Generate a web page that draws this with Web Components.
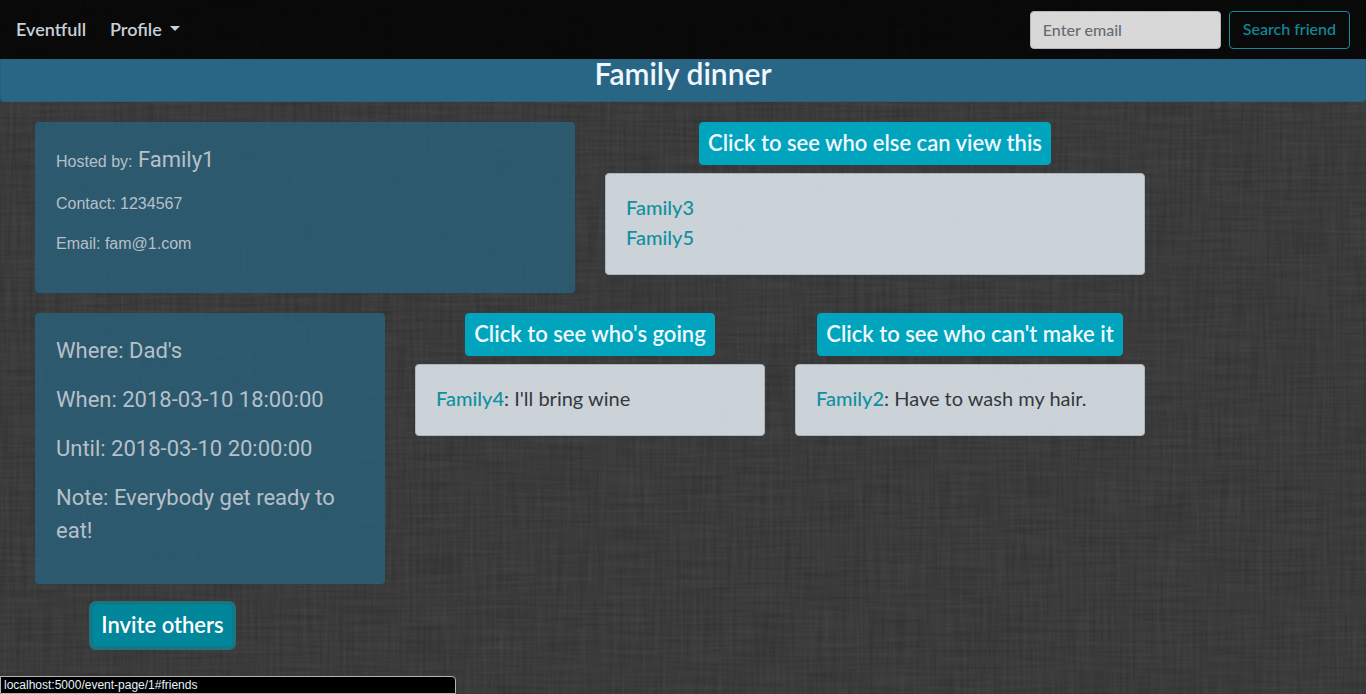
<!DOCTYPE html>
<html lang="en">
<head>
<meta charset="utf-8">
<meta name="viewport" content="width=device-width, initial-scale=1">
<title>Eventfull</title>
<style>
  body { margin: 0; background: #383838; font-family: Lato, "Liberation Sans", sans-serif; }
</style>
</head>
<body>
<event-page></event-page>

<script>
function define(name, html) {
  const template = document.createElement('template');
  template.innerHTML = html;
  customElements.define(name, class extends HTMLElement {
    connectedCallback() {
      if (this.shadowRoot) return;
      this.attachShadow({ mode: 'open' }).append(template.content.cloneNode(true));
    }
  });
}

define('linen-backdrop', `
  <style>
    :host { display: block; position: absolute; inset: 0; z-index: -1; overflow: hidden; }
    svg { display: block; width: 100%; height: 100%; }
  </style>
  <svg aria-hidden="true">
    <filter id="linen" x="0" y="0" width="100%" height="100%" color-interpolation-filters="sRGB">
      <feTurbulence type="fractalNoise" baseFrequency="0.3 0.015" numOctaves="2" seed="4" result="warp"/>
      <feTurbulence type="fractalNoise" baseFrequency="0.015 0.3" numOctaves="2" seed="9" result="weft"/>
      <feComposite in="warp" in2="weft" operator="arithmetic" k2="0.5" k3="0.5"/>
      <feColorMatrix values="0.11 0 0 0 0.175  0.11 0 0 0 0.175  0.11 0 0 0 0.175  0 0 0 0 1"/>
    </filter>
    <rect width="100%" height="100%" filter="url(#linen)"/>
  </svg>`);

define('nav-bar', `
  <style>
    :host { display: block; background: rgba(0,0,0,.84); color: #c8d0d8; }
    nav { display: flex; align-items: center; gap: 24px; padding: 11px 16px 10px; }
    a, .menu { color: inherit; font: 600 18px/28px Lato, sans-serif; text-decoration: none; background: none; border: 0; padding: 0 0 2px; }
    .menu { display: flex; align-items: center; gap: 8px; }
    .menu::after { content: ""; border: 5px solid transparent; border-top-color: currentColor; border-bottom: 0; margin-bottom: 2px; }
    form { display: flex; gap: 8px; margin-left: auto; }
    input, .search { box-sizing: border-box; height: 38px; border-radius: 4px; font: 500 16px/24px Lato, sans-serif; }
    input { width: 191px; padding: 0 12px 2px; border: 1px solid #b1b7bd; background: #d8d8d8; color: #495057; }
    input::placeholder { color: #646c74; opacity: 1; }
    .search { padding: 0 13px 2px; border: 1px solid #118b9c; background: none; color: #118b9c; }
  </style>
  <nav>
    <a href="#home">Eventfull</a>
    <button class="menu" type="button" aria-haspopup="true">Profile</button>
    <form>
      <input type="email" placeholder="Enter email" aria-label="Enter email">
      <button class="search" type="button">Search friend</button>
    </form>
  </nav>`);

define('event-banner', `
  <style>
    :host { display: block; background: #296685; border: 1px solid #295d78; border-top: 0; border-radius: 0 0 4px 4px; }
    h1 { margin: 0; padding-bottom: 14px; font: 600 30px/28px Lato, sans-serif; color: #f0f8ff; text-align: center; }
  </style>
  <h1><slot></slot></h1>`);

define('info-card', `
  <style>
    :host { display: block; box-sizing: border-box; padding: 20px; border: 1px solid rgba(36,93,121,.8); border-radius: 4px;
      background: rgba(43,96,123,.82); color: #b7c0c8; font-family: Roboto, sans-serif; font-size: 22px; line-height: 33px; }
    ::slotted(p) { margin: 0 0 16px; }
  </style>
  <slot></slot>`);

define('reply-card', `
  <style>
    :host { display: block; padding: 18px 20px 22px; border: 1px solid #adb4bb; border-radius: 4px;
      background: rgba(224,232,238,.88); color: #34393d; font-size: 20px; font-weight: 400; line-height: 30px; }
    ::slotted(p) { margin: 0; }
  </style>
  <slot></slot>`);

define('action-button', `
  <style>
    :host { display: flex; justify-content: center; }
    button { padding: 3px 8px 5px; border: 1px solid #00a4bd; border-radius: 4px; background: #00a4bd; color: #f0f8ff;
      font: 600 22px/33px Lato, sans-serif; }
    :host([active]) button { background: #01869b; border-color: #017f93; color: #fff; box-shadow: 0 0 0 3px #1d747f; }
  </style>
  <button type="button"><slot></slot></button>`);

define('user-link', `
  <style>
    :host { display: inline; }
    a { color: #118fa0; font-weight: 500; text-decoration: none; }
  </style>
  <a href="#profile"><slot></slot></a>`);

define('field-label', `
  <style>
    :host { display: inline; font: 16px "Liberation Sans", sans-serif; }
  </style>
  <slot></slot>`);

define('link-status', `
  <style>
    :host { display: block; position: fixed; left: 0; bottom: 0; box-sizing: border-box; width: 456px; max-width: 100%;
      padding: 0 3px; border: 1px solid #b4b4b4; border-radius: 0 4px 0 0; background: #000; color: #e6f3fb;
      font: 12px/16px "Liberation Sans", sans-serif; }
  </style>
  <slot></slot>`);

define('event-page', `
  <style>
    :host { display: block; position: relative; z-index: 0; box-sizing: border-box; min-height: 100vh; overflow: hidden; }
    main { display: grid; grid-template-columns: repeat(12, minmax(0, 1fr)); gap: 20px 30px; align-items: start;
      max-width: 1110px; margin: 20px 35px 44px; }
    section { display: grid; gap: 8px; }
    .half { grid-column: span 6; }
    .third { grid-column: span 4; }
    .quarter { grid-column: span 3; }
    .small { font: 16px/24px "Liberation Sans", sans-serif; }
    @media (max-width: 800px) { .half, .third, .quarter { grid-column: 1 / -1; } }
  </style>
  <linen-backdrop></linen-backdrop>
  <nav-bar></nav-bar>
  <event-banner>Family dinner</event-banner>
  <main>
    <info-card class="half">
      <p><field-label>Hosted by:</field-label> Family1</p>
      <p class="small">Contact: 1234567</p>
      <p class="small">Email: fam@1.com</p>
    </info-card>
    <section class="half">
      <action-button>Click to see who else can view this</action-button>
      <reply-card>
        <p><user-link>Family3</user-link></p>
        <p><user-link>Family5</user-link></p>
      </reply-card>
    </section>
    <info-card class="third">
      <p>Where: Dad's</p>
      <p>When: 2018-03-10 18:00:00</p>
      <p>Until: 2018-03-10 20:00:00</p>
      <p>Note: Everybody get ready to eat!</p>
    </info-card>
    <section class="third">
      <action-button>Click to see who's going</action-button>
      <reply-card><p><user-link>Family4</user-link>: I'll bring wine</p></reply-card>
    </section>
    <section class="third">
      <action-button>Click to see who can't make it</action-button>
      <reply-card><p><user-link>Family2</user-link>: Have to wash my hair.</p></reply-card>
    </section>
    <action-button class="quarter" active>Invite others</action-button>
  </main>
  <link-status>localhost:5000/event-page/1#friends</link-status>`);
</script>
</body>
</html>
